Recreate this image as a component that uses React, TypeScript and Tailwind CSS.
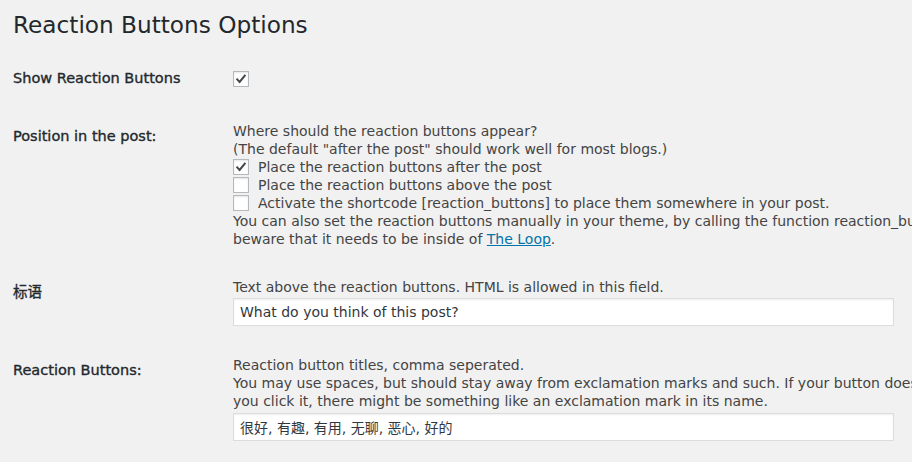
import React from "react";

function Checkbox({ checked }: { checked?: boolean }) {
  return (
    <span className="inline-flex h-4 w-4 shrink-0 items-center justify-center border border-[#b4b9be] bg-white shadow-[inset_0_1px_2px_rgba(0,0,0,0.1)]">
      {checked && (
        <svg width="12" height="12" viewBox="0 0 12 12" fill="none" aria-hidden>
          <path
            d="M2.2 6.4 L4.6 8.9 L9.8 2.6"
            stroke="#40464d"
            strokeWidth="2"
            strokeLinecap="square"
            strokeLinejoin="miter"
          />
        </svg>
      )}
    </span>
  );
}

function Label({ children }: { children: React.ReactNode }) {
  return (
    <div className="py-5 text-[14.5px] leading-[18px] font-normal text-[#23282d] [-webkit-text-stroke:0.35px_#23282d]">
      {children}
    </div>
  );
}

function TextInput({ value, className }: { value: string; className?: string }) {
  return (
    <input
      readOnly
      value={value}
      className={
        "block h-[28px] w-[661px] border border-[#ddd] bg-white px-[6px] text-[14px] text-[#32373c] shadow-[inset_0_1px_2px_rgba(0,0,0,0.07)] outline-none " +
        (className ?? "")
      }
    />
  );
}

export default function App() {
  return (
    <div className="min-h-screen w-[912px] overflow-hidden bg-[#f1f1f1] pl-[13px] text-[14px] leading-[18px] text-[#444] font-['DejaVu_Sans','Noto_Sans_CJK_SC',sans-serif]">
      <h1 className="pt-[10px] pb-[10px] text-[23.2px] leading-[29px] font-normal text-[#23282d]">
        Reaction Buttons Options
      </h1>

      <div className="grid grid-cols-[220px_1fr]">
        {/* Show buttons */}
        <Label>Show Reaction Buttons</Label>
        <div className="py-[15px]">
          <div className="mt-[7px]">
            <Checkbox checked />
          </div>
        </div>

        {/* Position */}
        <Label>Position in the post:</Label>
        <div className="py-[15px] whitespace-nowrap">
          <div>Where should the reaction buttons appear?</div>
          <div>(The default "after the post" should work well for most blogs.)</div>
          <label className="flex items-center gap-[9px]">
            <Checkbox checked />
            <span>Place the reaction buttons after the post</span>
          </label>
          <label className="flex items-center gap-[9px]">
            <Checkbox />
            <span>Place the reaction buttons above the post</span>
          </label>
          <label className="flex items-center gap-[9px]">
            <Checkbox />
            <span>Activate the shortcode [reaction_buttons] to place them somewhere in your post.</span>
          </label>
          <div>
            You can also set the reaction buttons manually in your theme, by calling the function
            reaction_buttons(). But
          </div>
          <div>
            beware that it needs to be inside of{" "}
            <a href="#" className="text-[#0073aa] underline">
              The Loop
            </a>
            .
          </div>
        </div>

        {/* Tagline */}
        <Label>标语</Label>
        <div className="py-[15px] whitespace-nowrap">
          <div>Text above the reaction buttons. HTML is allowed in this field.</div>
          <TextInput value="What do you think of this post?" className="mt-[2px]" />
        </div>

        {/* Buttons */}
        <Label>Reaction Buttons:</Label>
        <div className="py-[15px] whitespace-nowrap">
          <div>Reaction button titles, comma seperated.</div>
          <div>
            You may use spaces, but should stay away from exclamation marks and such. If your button
            doesn't work when
          </div>
          <div>you click it, there might be something like an exclamation mark in its name.</div>
          <TextInput value="很好, 有趣, 有用, 无聊, 恶心, 好的" className="mt-[3px]" />
        </div>
      </div>
    </div>
  );
}
